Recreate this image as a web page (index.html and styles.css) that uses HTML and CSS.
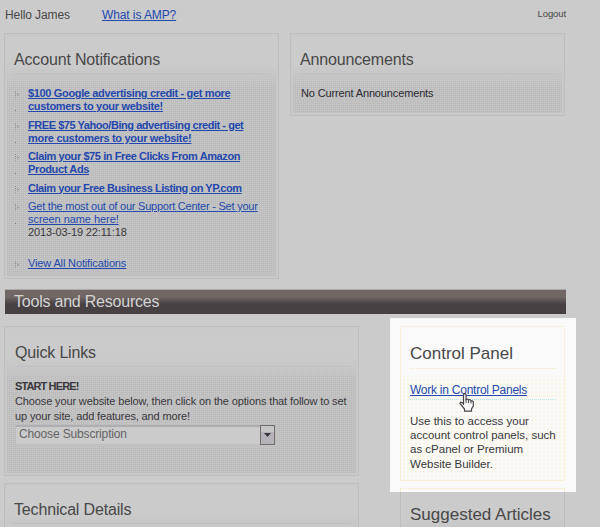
FILE: index.html
```html
<!DOCTYPE html>
<html lang="en">
<head>
<meta charset="utf-8">
<title>Account Management</title>
<link rel="stylesheet" href="styles.css">
</head>
<body>
<header class="topbar">
  <span class="hello">Hello James</span>
  <a class="amp" href="#">What is AMP?</a>
  <span class="logout">Logout</span>
</header>
<div class="row">
  <section class="card notifications">
    <h2>Account Notifications</h2>
    <ul>
      <li class="two"><a class="bold" href="#"><span class="n1">$100 Google advertising credit - get more</span><br><span class="n2">customers to your website!</span></a></li>
      <li class="two"><a class="bold" href="#"><span class="n3">FREE $75 Yahoo/Bing advertising credit - get</span><br><span class="n2">more customers to your website!</span></a></li>
      <li class="two"><a class="bold" href="#"><span class="n5">Claim your $75 in Free Clicks From Amazon</span><br><span class="n6">Product Ads</span></a></li>
      <li><a class="bold" href="#"><span class="n3">Claim your Free Business Listing on YP.com</span></a></li>
      <li class="two"><a href="#"><span class="n8">Get the most out of our Support Center - Set your</span><br><span class="n9">screen name here!</span></a><br><span class="n10">2013-03-19 22:11:18</span></li>
      <li class="all"><a href="#"><span class="n10">View All Notifications</span></a></li>
    </ul>
  </section>
  <section class="card announcements">
    <h2>Announcements</h2>
    <p>No Current Announcements</p>
  </section>
</div>
<h1 class="bar">Tools and Resources</h1>
<div class="row tools">
  <div class="left">
    <section class="card quick">
      <h2>Quick Links</h2>
      <p><strong>START HERE!</strong><br>Choose your website below, then click on the options that follow to set<br>up your site, add features, and more!</p>
      <div class="select"><span>Choose Subscription</span><i><svg width="8" height="4" viewBox="0 0 8 4"><path d="M0 0H7L3.500 4Z" fill="#3c383a"/></svg></i></div>
    </section>
    <section class="card technical"><h2>Technical Details</h2></section>
  </div>
  <div class="right">
    <div class="spot">
      <section class="card panel">
        <h2>Control Panel</h2>
        <div class="work"><a href="#">Work in Control Panels</a>
          <svg class="hand" width="15" height="19" viewBox="0 0 15 19"><path d="M4.500 11V2.500Q4.500 .7 5.800 .7T7.100 2.500V6.500Q9 5.500 9.500 7Q11.300 6 12 8Q14.300 7.500 14.300 9.500V13L12.500 16V18.200H5.500V16L1 10.500Q1 8.500 3 9.500Z" fill="#fafafa" stroke="#484448" stroke-width="1.200"/><path d="M7.100 6V10M9.500 7V10M12 8V10.500" stroke="#484448" fill="none"/></svg>
        </div>
        <p>Use this to access your<br>account control panels, such<br>as cPanel or Premium<br>Website Builder.</p>
      </section>
      <div class="edge"></div>
    </div>
    <section class="card articles"><h2>Suggested Articles</h2></section>
  </div>
</div>
</body>
</html>
```
FILE: styles.css
```css
* { box-sizing: border-box; }
body { margin: 0; width: 600px; height: 527px; overflow: hidden; background: #cbcbcb; color: #39383c; font: 11px/13px "Liberation Sans", Arial, sans-serif; white-space: nowrap; }
a { color: #2448ae; text-decoration: underline; }
h1, h2, p, ul { margin: 0; padding: 0; font-weight: normal; }
.topbar { display: flex; height: 33px; padding: 8px 34px 0 5px; color: #484848; font-size: 12px; line-height: 15px; letter-spacing: -0.1px; }
.hello { width: 97px; }
.logout { margin-left: auto; font-size: 9.500px; line-height: 11px; }
.row { display: flex; gap: 11px; padding-left: 4px; align-items: flex-start; }
.card { border: 1px solid #bdbdbd; padding: 16px 9px 0; background: linear-gradient(#cbcbcb 30px, #cbcbcb00 54px), conic-gradient(#cacaca 25%, #bdbdbd 0) 0 0 / 2px 2px; box-shadow: inset 0 0 0 2px #c9c9c9; }
.card h2 { height: 24px; border-bottom: 1px solid #bfbfbf; font-size: 16px; line-height: 20px; letter-spacing: -0.160px; color: #484848; }
.notifications { width: 275px; height: 246px; }
.announcements { width: 275px; height: 83px; }
.announcements p { padding: 13px 1px; color: #2b2a30; letter-spacing: -0.140px; }
.notifications ul { list-style: none; padding: 13px 0 0 14px; line-height: 13.250px; }
.notifications li { position: relative; margin-bottom: 5px; }
.notifications li::before { content: ""; position: absolute; left: -13px; top: 4px; width: 1px; height: 1px; background: #8f878f; box-shadow: 0 2px #8f878f, 0 4px #8f878f, 0 6px #a59e9b, 2px 2px #a09390, 2px 4px #a09390, 3px 3px #8f878f; }
.notifications .two::after { content: ""; position: absolute; left: -13px; top: 23px; width: 1px; height: 1px; background: #85715f; }
.notifications .all { margin-top: 17px; }
.bold { font-weight: bold; }
.n1 { letter-spacing: -0.345px; }
.n2 { letter-spacing: -0.310px; }
.n3 { letter-spacing: -0.450px; }
.n5 { letter-spacing: -0.410px; }
.n6 { letter-spacing: -0.360px; }
.n8 { letter-spacing: -0.230px; }
.n9 { letter-spacing: -0.060px; }
.n10 { letter-spacing: -0.140px; }
.bar { width: 561px; height: 25px; margin: 10px 0 12px 5px; padding-left: 9px; background: linear-gradient(#716865 7px, #474144 14px); border-top: 1px solid #aaa; color: #d4d4d4; font-size: 16px; line-height: 23px; letter-spacing: -0.220px; }
.tools { gap: 31px; }
.left { width: 355px; }
.quick { height: 150px; padding-left: 10px; }
.quick p { padding-top: 12px; line-height: 15px; letter-spacing: -0.130px; }
.quick strong { letter-spacing: -0.880px; }
.select { display: flex; width: 260px; height: 20px; margin-top: 1px; background: #cbcbcb; border: 1px solid #bdbdbd; border-top: 2px solid #aeadb1; color: #646464; font-size: 12px; line-height: 14px; letter-spacing: -0.150px; }
.select span { padding-left: 3px; flex: 1; }
.select i { width: 15px; height: 20px; margin: -2px -1px 0 0; border: 1px solid #746c69; background: linear-gradient(#c6c6c6 35%, #b5b3b9 35%); display: flex; align-items: center; justify-content: center; }
.technical { height: 44px; margin-top: 7px; border-bottom: 0; }
.right { width: 186px; margin-top: -8px; }
.spot { height: 174px; padding: 8px 11px 0 10px; background: #fafafa; }
.panel { height: 155px; background: linear-gradient(#fafafa 48px, #fafafa00 52px), conic-gradient(#faf4df 25%, #fafafa 0) 0 0 / 4px 4px, #fafafa; border: 1px dotted #f5e8bf; box-shadow: none; }
.panel h2 { height: 26px; border-bottom: 1px dotted #f5e8bf; font-size: 17px; line-height: 21px; letter-spacing: 0; }
.work { position: relative; padding-top: 15px; height: 31px; border-bottom: 1px dotted #b9e6ea; font-size: 12px; letter-spacing: -0.250px; }
.hand { position: absolute; left: 49px; top: 24px; z-index: 1; }
.panel p { padding-top: 14px; font-size: 11.500px; line-height: 14.200px; }
.edge { height: 4px; margin-top: 7px; border: 1px dotted #f5e8bf; border-bottom: 0; }
.articles { width: 165px; height: 35px; margin-left: 10px; padding-top: 13px; border-width: 0 1px; background: linear-gradient(#cbcbcb 26px, #c0c0c0 50px); box-shadow: none; }
.articles h2 { height: 22px; border: 0; font-size: 17px; letter-spacing: 0; }
```
